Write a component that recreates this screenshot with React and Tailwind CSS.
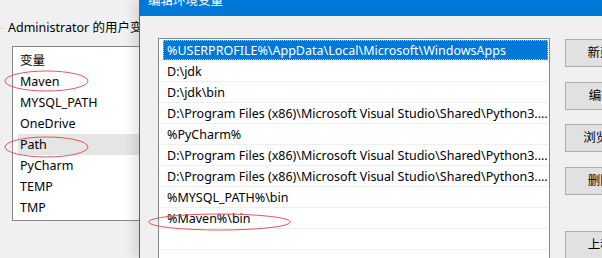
import React from "react";

const font = { fontFamily: '"Noto Sans", "Noto Sans CJK SC", sans-serif' };

const leftRows = ["变量", "Maven", "MYSQL_PATH", "OneDrive", "Path", "PyCharm", "TEMP", "TMP"];
const pathRows = [
  "%USERPROFILE%\\AppData\\Local\\Microsoft\\WindowsApps",
  "D:\\jdk",
  "D:\\jdk\\bin",
  "D:\\Program Files (x86)\\Microsoft Visual Studio\\Shared\\Python3....",
  "%PyCharm%",
  "D:\\Program Files (x86)\\Microsoft Visual Studio\\Shared\\Python3....",
  "D:\\Program Files (x86)\\Microsoft Visual Studio\\Shared\\Python3....",
  "%MYSQL_PATH%\\bin",
  "%Maven%\\bin",
  "",
  "",
];

function Btn({ label, className }) {
  return (
    <div
      className={
        "w-[87px] h-[28px] shrink-0 flex items-center justify-center bg-[#e1e1e1] border border-[#adadad] text-[12.5px] text-black whitespace-nowrap " +
        className
      }
    >
      {label}
    </div>
  );
}

export default function App() {
  return (
    <div
      className="relative w-[602px] h-[258px] overflow-hidden bg-[#f0f0f0] flex text-[12.5px] text-black"
      style={font}
    >
      {/* background window */}
      <div className="w-[139px] shrink-0 overflow-hidden flex flex-col">
        <div className="pt-[18px] h-[38px] flex items-center">
          <div className="w-[5px] h-px bg-[#dcdcdc] shrink-0" />
          <div className="ml-[3px] whitespace-nowrap leading-[20px]">Administrator 的用户变量(U)</div>
        </div>
        <div className="mt-[8px] ml-[12px] w-[200px] h-[175px] shrink-0 border border-[#828790] bg-white pt-[3px]">
          {leftRows.map((r) => (
            <div
              key={r}
              className={
                "h-[21px] ml-[5px] pl-[2px] pt-[2px] flex items-center whitespace-nowrap " +
                (r === "Path" ? "bg-[#e5e5e5]" : "")
              }
            >
              {r}
            </div>
          ))}
        </div>
      </div>

      {/* dialog */}
      <div className="flex-1 flex flex-col border-l border-[#0078d7] shadow-[-6px_0_10px_rgba(0,0,0,0.10)] z-10 bg-[#f0f0f0]">
        <div className="-mt-[14px] h-[30px] shrink-0 bg-[#0078d7] flex items-center pl-[8px] text-white text-[12.5px] whitespace-nowrap">
          编辑环境变量
        </div>
        <div className="flex">
          <div className="ml-[18px] mt-[22px] w-[392px] h-[240px] shrink-0 border border-[#828790] bg-white pt-[1px] overflow-hidden">
            {pathRows.map((r, i) => (
              <div key={i} className="h-[21px] border-b border-[#efefef] flex">
                <div
                  className={
                    "flex-1 ml-[4px] mr-[1px] pl-[3px] pt-[2px] flex items-center whitespace-nowrap overflow-hidden " +
                    (i === 0
                      ? "bg-[#0078d7] text-white border border-dotted border-[#f0c080]"
                      : "border border-transparent")
                  }
                >
                  {r}
                </div>
              </div>
            ))}
          </div>
          <div className="ml-[15px] flex flex-col">
            <Btn label="新建(N)" className="mt-[23px]" />
            <Btn label="编辑(E)" className="mt-[15px]" />
            <Btn label="浏览(B)..." className="mt-[14px]" />
            <Btn label="删除(D)" className="mt-[15px]" />
            <Btn label="上移(U)" className="mt-[36px]" />
          </div>
        </div>
      </div>

      {/* red annotation ellipses */}
      <svg
        className="absolute inset-0 pointer-events-none z-20"
        width="602"
        height="258"
        viewBox="0 0 602 258"
      >
        <ellipse cx="46.5" cy="81" rx="41.5" ry="10" fill="none" stroke="#e5545a" strokeWidth="1" />
        <ellipse cx="46.5" cy="147" rx="41.5" ry="10" fill="none" stroke="#e5545a" strokeWidth="1" />
        <ellipse cx="219.5" cy="222" rx="71" ry="8" fill="none" stroke="#e5545a" strokeWidth="1" />
      </svg>
    </div>
  );
}
